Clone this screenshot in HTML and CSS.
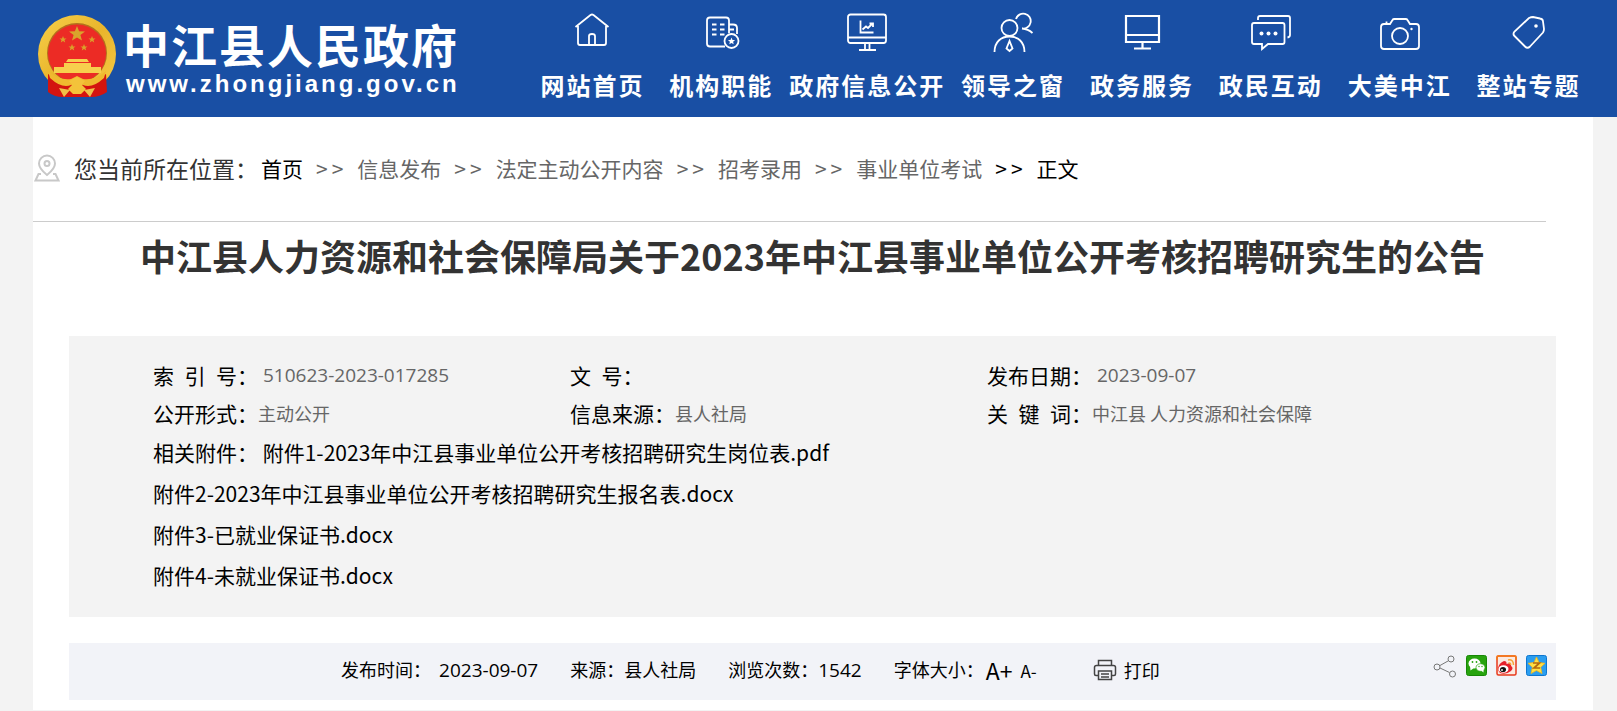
FILE: index.html
```html
<!DOCTYPE html>
<html lang="zh-CN">
<head>
<meta charset="utf-8">
<title>中江县人力资源和社会保障局关于2023年中江县事业单位公开考核招聘研究生的公告</title>
<link rel="stylesheet" href="styles.css">
</head>
<body>
<header class="header">
  <a class="logo" href="#">
    <svg class="emblem" viewBox="0 0 78 84" aria-hidden="true">
      <defs>
        <linearGradient id="gold" x1="0" y1="0" x2="1" y2="1">
          <stop offset="0" stop-color="#f7d04a"/><stop offset=".5" stop-color="#e9b52c"/><stop offset="1" stop-color="#f6cb45"/>
        </linearGradient>
      </defs>
      <circle cx="39" cy="39" r="39" fill="url(#gold)"/>
      <circle cx="39" cy="38" r="30" fill="#b5701c"/>
      <circle cx="39" cy="38.500" r="29" fill="#ec2b25"/>
      <path d="M10 59 Q22 68 39 68 Q56 68 68 59 L69 77 Q62 82 53 82 L25 82 Q16 82 10 77Z" fill="#d3140f"/>
      <path d="M16 52h47v6H16zM26 48h27v5H26zM30 44h19l2 3H28z" fill="#f7cf4d"/>
      <path d="M10 56Q22 66 33 64L39 61L45 64Q56 66 68 56L66 63Q54 74 45 70L39 68L33 70Q24 74 12 63Z" fill="#efb92f"/>
      <path d="M39 62l8 4-3 4 4 4-5 5h-8l-5-5 4-4-3-4z" fill="#f3c33a"/>
      <path d="M21 73l11 2-6 7zM57 73l-11 2 6 7z" fill="#eec148"/>
      <path d="M39 11l2.100 5.300 5.900.3-4.600 3.500 1.600 5.500-5-3.200-5 3.200 1.600-5.500-4.600-3.500 5.900-.3z" fill="#d9a42c"/>
      <path d="M25 21l1 2.400 2.500.1-2 1.600.7 2.400-2.200-1.400-2.200 1.400.7-2.400-2-1.600 2.500-.1zM54 21l1 2.400 2.500.1-2 1.600.7 2.400-2.200-1.400-2.200 1.400.7-2.400-2-1.600 2.500-.1zM34 29l1 2.400 2.500.1-2 1.600.7 2.400-2.200-1.400-2.200 1.400.7-2.400-2-1.600 2.500-.1zM46 29l1 2.400 2.500.1-2 1.600.7 2.400-2.200-1.400-2.200 1.400.7-2.400-2-1.600 2.500-.1z" fill="#dba02b"/>
    </svg>
    <span class="logo-text">
      <span class="logo-name">中江县人民政府</span>
      <span class="logo-url">www.zhongjiang.gov.cn</span>
    </span>
  </a>
  <nav class="nav">
    <a class="nav-item" href="#">
      <svg class="nav-icon" viewBox="0 0 40 40"><path d="M3.500 15L18.500 3Q20 2 21.500 3L36.500 15M6 14V31Q6 33 8 33H32Q34 33 34 31V14M17 33V24Q17 22 20 22T23 24V33"/></svg>
      <span>网站首页</span>
    </a>
    <a class="nav-item" href="#">
      <svg class="nav-icon" viewBox="0 0 40 40"><path d="M24 34.500H9Q6 34.500 6 31.500V8.500Q6 5.500 9 5.500H25Q28 5.500 28 8.500V21M28 12.500H32Q36 12.500 36 16V22M28 17.500H33M11 12.500h4.500M11 17.500h4.500M11 22.500h4.500M19 12.500h4.500M19 17.500h4.500M19 22.500h4.500"/><circle cx="30.500" cy="29" r="7"/><path class="solid" d="M30.500 25.500l1 2.400 2.600.2-2 1.700.6 2.500-2.200-1.400-2.200 1.400.6-2.500-2-1.700 2.600-.2z"/></svg>
      <span>机构职能</span>
    </a>
    <a class="nav-item" href="#">
      <svg class="nav-icon" viewBox="0 0 40 40"><rect x="1" y="2.500" width="38" height="28.500" rx="2.500"/><path d="M1 25.500H39M18 31V38M22.500 31V38M12 38H29M13.500 8.500V20.500H26.500M15.500 17.500L19 14.500L21 16L25.500 11.500M22.500 11.500H26V15"/></svg>
      <span>政府信息公开</span>
    </a>
    <a class="nav-item" href="#">
      <svg class="nav-icon" viewBox="0 0 40 40"><circle cx="16.500" cy="16" r="8"/><path d="M1.500 40C1.500 30 8 24.500 16.500 24.500S31.500 30 31.500 40M23 7A7.500 7.500 0 1 1 29 16.500M29 16.500Q35 17 39.500 21M16.500 29L13.500 36.500L16.500 39L19.500 36.500Z"/></svg>
      <span>领导之窗</span>
    </a>
    <a class="nav-item" href="#">
      <svg class="nav-icon" viewBox="0 0 40 40"><path class="bold" d="M4 4H37V30H4ZM4 23H37M20.500 30V36M12 36.500H29"/></svg>
      <span>政务服务</span>
    </a>
    <a class="nav-item" href="#">
      <svg class="nav-icon" viewBox="0 0 40 40"><path d="M7 8V6Q7 4 9 4H37Q39 4 39 6V23Q39 25 36.500 25.500M3 11H31.500Q33.500 11 33.500 13V30Q33.500 32 31.500 32H17L11 37V32H3Q1 32 1 30V13Q1 11 3 11Z"/><g class="solid"><circle cx="10.500" cy="21.500" r="2"/><circle cx="17.500" cy="21.500" r="2"/><circle cx="24.500" cy="21.500" r="2"/></g></svg>
      <span>政民互动</span>
    </a>
    <a class="nav-item" href="#">
      <svg class="nav-icon" viewBox="0 0 40 40"><path d="M4 12H10L12.500 8Q13 7 14.500 7H25.500Q27 7 27.500 8L30 12H36Q39 12 39 15V34Q39 37 36 37H4Q1 37 1 34V15Q1 12 4 12ZM6.500 12V9.500"/><circle cx="20" cy="24" r="8"/><circle class="solid" cx="31.500" cy="17" r="1.200"/></svg>
      <span>大美中江</span>
    </a>
    <a class="nav-item" href="#">
      <svg class="nav-icon" viewBox="0 0 40 40"><path d="M20 6Q22 5 24 5L31 6.500Q34 7 34 9.500L35 17Q35 19 34 20.500L21 34.500Q18.500 37 16 34.500L5.500 24Q3.500 22 5.500 19.500Z"/><circle class="solid" cx="27" cy="14" r="1.800"/></svg>
      <span>整站专题</span>
    </a>
  </nav>
</header>

<main class="page">
  <nav class="crumbs" aria-label="位置">
    <svg class="pin" viewBox="0 0 26 28" aria-hidden="true"><path d="M13 21C8 17 5 13.500 5 9.500a8 8 0 0 1 16 0C21 13.500 18 17 13 21ZM7 20H4.500L1.500 26.500H24.500L21.500 20H19"/><circle cx="13" cy="9.500" r="2.500"/></svg>
    <span class="crumbs-label">您当前所在位置：</span>
    <ol class="crumbs-list">
      <li><a class="strong" href="#">首页</a></li>
      <li><span class="sep">&gt;&gt;</span><a href="#">信息发布</a></li>
      <li><span class="sep">&gt;&gt;</span><a href="#">法定主动公开内容</a></li>
      <li><span class="sep">&gt;&gt;</span><a href="#">招考录用</a></li>
      <li><span class="sep">&gt;&gt;</span><a href="#">事业单位考试</a></li>
      <li class="strong"><span class="sep">&gt;&gt;</span>正文</li>
    </ol>
  </nav>

  <article class="article">
    <h1 class="title">中江县人力资源和社会保障局关于2023年中江县事业单位公开考核招聘研究生的公告</h1>

    <section class="panel">
      <dl class="facts">
        <div class="fact"><dt>索&ensp;引&ensp;号：</dt><dd class="number">510623-2023-017285</dd></div>
        <div class="fact"><dt>文&ensp;号：</dt><dd></dd></div>
        <div class="fact"><dt>发布日期：</dt><dd class="number">2023-09-07</dd></div>
        <div class="fact"><dt>公开形式：</dt><dd>主动公开</dd></div>
        <div class="fact"><dt>信息来源：</dt><dd>县人社局</dd></div>
        <div class="fact"><dt>关&ensp;键&ensp;词：</dt><dd>中江县 人力资源和社会保障</dd></div>
      </dl>
      <ul class="files">
        <li>相关附件： <a href="#">附件1-2023年中江县事业单位公开考核招聘研究生岗位表.pdf</a></li>
        <li><a href="#">附件2-2023年中江县事业单位公开考核招聘研究生报名表.docx</a></li>
        <li><a href="#">附件3-已就业保证书.docx</a></li>
        <li><a href="#">附件4-未就业保证书.docx</a></li>
      </ul>
    </section>

    <section class="meta">
      <div class="meta-items">
        <span>发布时间：&nbsp; <span class="digits">2023-09-07</span></span>
        <span>来源：县人社局</span>
        <span>浏览次数：<span class="digits">1542</span></span>
        <span class="sizes">字体大小：<button class="size-up" type="button">A+</button><button class="size-down" type="button">A-</button></span>
      </div>
      <button class="print" type="button">
        <svg class="print-icon" viewBox="0 0 24 22" aria-hidden="true"><path d="M5.500 6V1.500H18.500V6M5 16.500H3Q1.500 16.500 1.500 15V8.500Q1.500 6.500 3.500 6.500H20.500Q22.500 6.500 22.500 8.500V15Q22.500 16.500 21 16.500H19M5.500 12H18.500V20.500H5.500ZM8 15H16M8 18H16"/></svg>
        打印
      </button>
      <div class="share">
        <a class="share-more" href="#" aria-label="分享"><svg viewBox="0 0 24 24"><path d="M7 10.500L15 6M7 13L16.500 17.500"/><circle cx="4" cy="12" r="3"/><circle cx="18" cy="4" r="3"/><circle cx="19.500" cy="19" r="3"/></svg></a>
        <a href="#" aria-label="微信"><svg viewBox="0 0 21 21"><rect x=".5" y=".5" width="20" height="20" rx="2" fill="#27a30e" stroke="#178706"/><ellipse cx="8.500" cy="8.500" rx="6" ry="5" fill="#fff"/><path d="M4 11L4.500 15.500L8 13Z" fill="#fff"/><ellipse cx="14.500" cy="12.500" rx="4.500" ry="3.800" fill="#fff" stroke="#27a30e" stroke-width=".7"/><path d="M15 15.500L17.500 17.500V14Z" fill="#fff"/><g fill="#27a30e"><circle cx="6.500" cy="7" r=".9"/><circle cx="10.500" cy="7" r=".9"/><circle cx="13" cy="11.500" r=".7"/><circle cx="16" cy="11.500" r=".7"/></g></svg></a>
        <a href="#" aria-label="微博"><svg viewBox="0 0 21 21"><rect x="1" y="1" width="19" height="19" rx="1.500" fill="#fbe9e0" stroke="#e8391c" stroke-width="1.500"/><path d="M1 5V2Q1 1 2 1H19Q20 1 20 2V5" fill="none" stroke="#f57f17" stroke-width="1.500"/><path d="M2 13Q3 8 8 6Q11 6 10.500 9Q16 7 15 11Q18 13 15 16Q10 20 4 18Q2 16 2 13Z" fill="#e6202a"/><ellipse cx="7.500" cy="14" rx="5" ry="3.800" fill="#fff"/><ellipse cx="7" cy="14.500" rx="3" ry="2.600" fill="#111"/><circle cx="6" cy="15" r=".9" fill="#fff"/><path d="M12 5Q17.500 4 17.500 10M12.500 8Q15 7.500 14.500 10" fill="none" stroke="#f5a437" stroke-width="1.500"/></svg></a>
        <a href="#" aria-label="QQ空间"><svg viewBox="0 0 21 21"><rect x=".5" y=".5" width="20" height="20" rx="2" fill="#2a9df0" stroke="#0d75cf"/><path d="M10.500 2L13 7.500L19 8.300L14.700 12.300L16 18.500L10.500 15.500L5 18.500L6.300 12.300L2 8.300L8 7.500Z" fill="#ffdf45" stroke="#f3b51b" stroke-width=".8" stroke-linejoin="round"/><path d="M7 8H13.500L8 13H14" fill="none" stroke="#b4690e" stroke-width="1.700"/></svg></a>
      </div>
    </section>
  </article>
</main>
</body>
</html>
```

FILE: styles.css
```css
* {
  box-sizing: border-box;
}

body {
  margin: 0;
  background: #f3f3f3;
  color: #000;
  font-family: "Noto Sans CJK SC", sans-serif;
}

a {
  color: inherit;
  text-decoration: none;
}

button {
  padding: 0;
  border: 0;
  background: none;
  color: inherit;
  font: inherit;
  cursor: pointer;
}

ol, ul, dl, dd {
  margin: 0;
  padding: 0;
  list-style: none;
}

/* Header */

.header {
  display: flex;
  align-items: flex-start;
  padding: 12px 24px 14px 38px;
  background: #194fa4;
  color: #fff;
}

.logo {
  display: flex;
  flex: none;
  gap: 7px;
  width: 490px;
  padding-top: 3px;
}

.emblem {
  width: 78px;
  height: 84px;
}

.logo-text {
  display: flex;
  flex-direction: column;
}

.logo-name {
  font-size: 46px;
  font-weight: 700;
  line-height: 56px;
  letter-spacing: 2px;
}

.logo-url {
  padding: 1px 0 0 3px;
  font: 700 24px/24px "Liberation Sans", sans-serif;
  letter-spacing: 3px;
}

.nav {
  display: grid;
  flex: 1;
  grid-template-columns: 129fr 129fr 163fr repeat(5, 129fr);
}

.nav-item {
  display: flex;
  flex-direction: column;
  align-items: center;
  gap: 15px;
  font-size: 24px;
  font-weight: 700;
  line-height: 36px;
  letter-spacing: 2px;
  white-space: nowrap;
}

.nav-icon {
  width: 40px;
  height: 40px;
  fill: none;
  stroke: #fff;
  stroke-width: 1.8;
  overflow: visible;
}

.nav-icon .bold {
  stroke-width: 2.2;
}

.nav-icon .solid {
  fill: #fff;
  stroke: none;
}

/* Page */

.page {
  margin: 0 24px 0 33px;
  background: #fff;
}

.crumbs {
  display: flex;
  align-items: center;
  width: 97%;
  height: 105px;
  padding-bottom: 2px;
  border-bottom: 1px solid #ccc;
}

.pin {
  width: 26px;
  height: 28px;
  margin: 0 14px 0 1px;
  fill: none;
  stroke: #c8c8c8;
  stroke-width: 2;
}

.crumbs-label {
  margin-right: 3px;
  color: #333;
  font-size: 23px;
}

.crumbs-list {
  display: flex;
  color: #666;
  font-size: 21px;
}

.sep {
  margin: 0 10px 0 13px;
  letter-spacing: 4px;
}

.strong {
  color: #000;
}

.article {
  padding: 0 37px 10px 36px;
}

.title {
  margin: 0;
  padding: 6px 0 54px;
  color: #333;
  font-size: 36px;
  line-height: 54px;
  text-align: center;
}

.panel {
  padding: 20px 152px 21px 84px;
  background: #f3f3f3;
  font-size: 21px;
}

.facts {
  display: grid;
  grid-template-columns: repeat(3, 1fr);
  line-height: 38px;
}

.fact {
  display: flex;
  white-space: nowrap;
}

.fact dd {
  color: #666;
  font-size: 18px;
}

.fact .number {
  padding-left: 5px;
  font-family: "Open Sans", sans-serif;
  font-size: 19px;
}

.files {
  line-height: 41px;
}

.meta {
  display: flex;
  align-items: center;
  margin-top: 26px;
  padding: 0 9px 3px 272px;
  background: #f2f3f8;
  font-size: 18px;
  line-height: 53px;
}

.meta-items {
  display: flex;
  gap: 32px;
}

.digits {
  font-family: "Open Sans", sans-serif;
  font-size: 19px;
}

.sizes {
  display: flex;
}

.size-up {
  margin-left: 2px;
  font-size: 23px;
}

.size-down {
  margin-left: 8px;
  font-size: 17px;
}

.print {
  display: flex;
  align-items: center;
  gap: 7px;
  margin-left: 56px;
}

.print-icon {
  width: 24px;
  height: 22px;
  fill: none;
  stroke: #444;
  stroke-width: 1.5;
}

.share {
  display: flex;
  gap: 9px;
  align-self: flex-start;
  margin-left: auto;
  padding-top: 12px;
}

.share a {
  display: flex;
}

.share svg {
  width: 21px;
  height: 21px;
}

.share .share-more svg {
  width: 24px;
  height: 24px;
  fill: none;
  stroke: #777;
}
```
